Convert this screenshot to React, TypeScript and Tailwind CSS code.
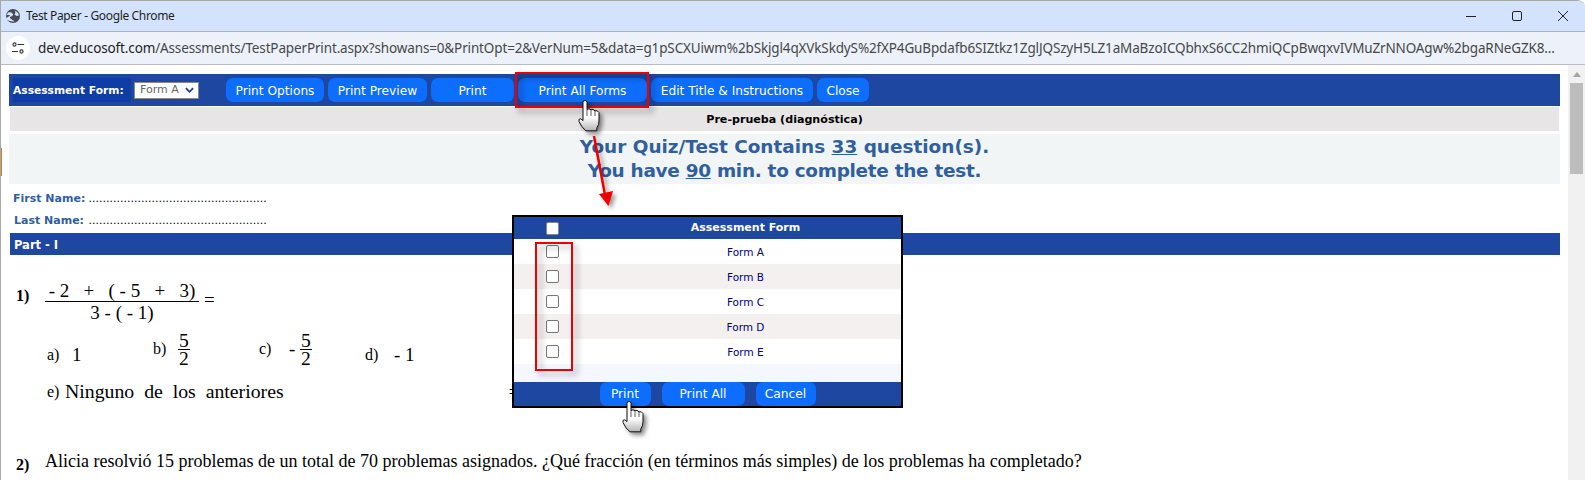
import React from "react";

const verdana = "[font-family:'DejaVu_Sans',Verdana,sans-serif]";

function Hand({ className }: { className: string }) {
  return (
    <svg viewBox="0 0 22 32" className={className}>
      <defs>
        <linearGradient id="handfill" x1="0" y1="0" x2="0" y2="1">
          <stop offset="0.55" stopColor="#ffffff" />
          <stop offset="1" stopColor="#b5b5b5" />
        </linearGradient>
      </defs>
      <path
        d="M5 2.2Q5 .5 7 .5T9 2.2V9.5Q11 8 13 9.8 15 8.6 17 10.8 19.5 10 21 12.6V21Q21 25 18.8 28V30.8H8Q3.5 27.5 1 21.5.2 18.5 2.8 18.8L5 20.6Z"
        fill="url(#handfill)"
        stroke="#111"
        strokeWidth="1"
        strokeLinejoin="round"
      />
      <path d="M9 9.5V16M13 9.8V16M17 10.8V16" stroke="#333" strokeWidth="0.8" fill="none" />
    </svg>
  );
}

function Btn({ w, low, children }: { w: string; low?: boolean; children: React.ReactNode }) {
  return (
    <div className={`${w} h-6 rounded-[7px] bg-[#0d6efd] text-white text-[12.2px] text-center shrink-0 ${low ? "leading-[27px]" : "leading-[25px]"}`}>
      {children}
    </div>
  );
}

function Frac({ n, d, tight }: { n: string; d: string; tight?: boolean }) {
  return (
    <div className={`flex flex-col items-center ${tight ? "leading-[17px] text-[19.5px]" : "leading-[21px] text-[19px] w-[154px]"}`}>
      <div className={`whitespace-pre border-b border-black ${tight ? "px-[1px]" : "w-full text-center"}`}>{n}</div>
      <div className="whitespace-pre">{d}</div>
    </div>
  );
}

const forms = ["Form A", "Form B", "Form C", "Form D", "Form E"];

export default function App() {
  return (
    <div className="relative w-[1585px] h-[480px] overflow-hidden bg-white flex flex-col border-l border-t border-[#a8a8a8] rounded-tr-lg">
      {/* Title bar */}
      <div className="h-[31px] bg-[#d3e3fd] border-b border-[#aab1bc] flex items-center pl-[5px] shrink-0 [font-family:'Noto_Sans',sans-serif]">
        <svg viewBox="0 0 14 14" className="w-[14px] h-[14px]">
          <circle cx="7" cy="7" r="7" fill="#474c54" />
          <path d="M2 3.5Q5 2.5 6.5 4.5T5 7.5 6.5 11 4 12 2 8 .8 6ZM9 1.5Q12 3 13 6.5L10.5 7 8.5 5.5 9.5 3.5Z" fill="#d3e3fd" />
        </svg>
        <span className="ml-[6px] text-[12px] text-[#1f1f1f] tracking-[-0.35px]">Test Paper - Google Chrome</span>
        <div className="ml-auto flex items-center pr-[15px] gap-[32px]">
          <svg viewBox="0 0 14 14" className="w-[14px] h-[14px]"><path d="M2 7.5H12" stroke="#222" strokeWidth="1" /></svg>
          <svg viewBox="0 0 14 14" className="w-[14px] h-[14px]"><rect x="2.5" y="2.5" width="9" height="9" rx="1.5" fill="none" stroke="#222" strokeWidth="1" /></svg>
          <svg viewBox="0 0 14 14" className="w-[14px] h-[14px]"><path d="M2 2L12 12M12 2L2 12" stroke="#222" strokeWidth="1" /></svg>
        </div>
      </div>
      {/* Address bar */}
      <div className="h-[33px] bg-[#edf2fa] border-b border-[#b9bcc2] flex items-center pl-[5px] shrink-0 [font-family:'Noto_Sans',sans-serif]">
        <div className="w-6 h-6 rounded-full bg-white flex items-center justify-center shrink-0">
          <svg viewBox="0 0 16 16" className="w-[14px] h-[14px]" fill="none" stroke="#333" strokeWidth="1.3">
            <circle cx="4" cy="4" r="1.8" />
            <path d="M7.5 4H15M1 12H8" />
            <circle cx="12" cy="12" r="1.8" />
          </svg>
        </div>
        <div className="ml-[8px] text-[13.5px] whitespace-nowrap text-[#474747] tracking-[-0.14px]">
          <span className="text-[#1f1f1f]">dev.educosoft.com</span>
          /Assessments/TestPaperPrint.aspx?showans=0&amp;PrintOpt=2&amp;VerNum=5&amp;data=g1pSCXUiwm%2bSkjgl4qXVkSkdyS%2fXP4GuBpdafb6SIZtkz1ZglJQSzyH5LZ1aMaBzoICQbhxS6CC2hmiQCpBwqxvIVMuZrNNOAgw%2bgaRNeGZK8...
        </div>
      </div>
      {/* Body */}
      <div className={`flex flex-1 min-h-0 ${verdana}`}>
        <div className="w-[1567px] shrink-0 pt-[9px] pl-[8px] pr-[8px] flex flex-col">
          <div className="h-8 bg-[#1e47a1] flex items-center pl-1 shrink-0">
            <div className="w-[118px] h-6 bg-[#0e3da5] text-white font-bold text-[10.7px] leading-[26px] whitespace-nowrap">
              Assessment Form:
            </div>
            <div className="ml-[3px] w-[65px] h-[17px] bg-white border border-[#8a8a8a] flex items-center pl-[5px] text-[11px] text-[#666] shrink-0">
              Form A
              <svg viewBox="0 0 10 6" className="ml-auto mr-[4px] w-[9px] h-[6px]" fill="none" stroke="#1e3f8a" strokeWidth="2">
                <path d="M1 1L5 5L9 1" />
              </svg>
            </div>
            <div className="ml-[27px] flex gap-1">
              <Btn low w="w-[98px]">Print Options</Btn>
              <Btn low w="w-[99px]">Print Preview</Btn>
              <Btn low w="w-[83px]">Print</Btn>
              <Btn low w="w-[129px]">Print All Forms</Btn>
              <Btn low w="w-[162px]">Edit Title &amp; Instructions</Btn>
              <Btn low w="w-[52px]">Close</Btn>
            </div>
          </div>
          <div className="mt-px ml-px mr-px h-6 bg-[#e7e5e6] text-center text-[11.1px] font-bold leading-[25px] text-black shrink-0">
            Pre-prueba (diagnóstica)
          </div>
          <div className="mt-[3px] h-[50px] pt-px bg-[#f2f5f6] text-center text-[18.45px] font-bold leading-[24px] text-[#2f5f9f] shrink-0">
            <div>Your Quiz/Test Contains <u>33</u> question(s).</div>
            <div className="tracking-[-0.28px]">You have <u>90</u> min. to complete the test.</div>
          </div>
          <div className="h-[49px] pl-[4px] text-[11px] shrink-0">
            <div className="mt-[4px] h-[22px] leading-[22px] whitespace-nowrap">
              <b className="inline-block w-[72px] text-center text-[#2f5f9f]">First Name:</b>{" "}
              <span className="text-black">...................................................</span>
            </div>
            <div className="h-[22px] leading-[22px] whitespace-nowrap">
              <b className="inline-block w-[72px] text-center text-[#2f5f9f]">Last Name:</b>{" "}
              <span className="text-black">...................................................</span>
            </div>
          </div>
          <div className="ml-px h-[22px] bg-[#1e47a1] text-white font-bold text-[11.5px] leading-[24px] pl-1 shrink-0">
            Part - I
          </div>
          <div className="[font-family:'Liberation_Serif',serif] text-black text-[19px] pl-[7px]">
            <div className="mt-[24px] flex items-center h-[44px]">
              <b className="w-[29px] text-[16px] mb-[10px]">1)</b>
              <Frac n="- 2   +   ( - 5   +   3)" d="3 - ( - 1)" />
              <span className="ml-[5px] mb-[1px]">=</span>
            </div>
            <div className="mt-[5px] pl-[31px] flex h-[42px] items-center">
              <div className="w-[106px] flex items-center pt-[12px]">
                <span className="text-[16px] w-[25px]">a)</span>1
              </div>
              <div className="w-[106px] flex items-center">
                <span className="text-[16px] w-[25px]">b)</span>
                <Frac tight n="5" d="2" />
              </div>
              <div className="w-[106px] flex items-center">
                <span className="text-[16px] w-[30px]">c)</span>-&nbsp;
                <Frac tight n="5" d="2" />
              </div>
              <div className="w-[106px] flex items-center pt-[12px]">
                <span className="text-[16px] w-[29px]">d)</span>- 1
              </div>
            </div>
            <div className="mt-[10px] pl-[31px] flex items-center h-[24px] whitespace-pre text-[19.8px]">
              <span className="text-[16px] w-[18px]">e)</span>
              <span>Ninguno  de  los  anteriores</span>
              <span className="ml-[225px] text-[18px]">=</span>
            </div>
            <div className="mt-[44px] flex whitespace-nowrap text-[18px]">
              <b className="w-[29px] text-[16px] pt-[5px]">2)</b>
              <span>Alicia resolvió 15 problemas de un total de 70 problemas asignados. ¿Qué fracción (en términos más simples) de los problemas ha completado?</span>
            </div>
          </div>
        </div>
        {/* Scrollbar */}
        <div className="w-[17px] shrink-0 bg-[#f1f1f1] flex flex-col items-center pt-[7px]">
          <div className="w-0 h-0 border-l-[4px] border-r-[4px] border-b-[5px] border-l-transparent border-r-transparent border-b-[#a3a3a3]" />
          <div className="mt-[6px] w-[13px] h-[91px] bg-[#bdbdbd]" />
        </div>
      </div>

      {/* Left edge stripe */}
      <div className="absolute left-[-1px] top-[147px] w-[2px] h-[28px] bg-[#c5803a]" />

      {/* Modal */}
      <div className={`absolute left-[511px] top-[214px] w-[391px] h-[193px] border-2 border-black bg-white flex flex-col ${verdana}`}>
        <div className="h-[22px] bg-[#1e47a1] flex items-center shrink-0">
          <div className="w-[76px] pl-[32px]">
            <div className="w-[13px] h-[13px] bg-white rounded-[2px] border border-[#8a8a8a]" />
          </div>
          <div className="flex-1 text-center text-white font-bold text-[11px] pt-px">Assessment Form</div>
        </div>
        {forms.map((f, i) => (
          <div key={f} className={`h-[25px] flex items-center shrink-0 ${i % 2 === 1 ? "bg-[#f3f0ef]" : "bg-white"}`}>
            <div className="w-[76px] pl-[32px]">
              <div className="w-[13px] h-[13px] bg-white rounded-[2px] border border-[#767676]" />
            </div>
            <div className="flex-1 text-center text-[#000080] text-[10.5px] pt-[2px]">{f}</div>
          </div>
        ))}
        <div className="h-[18px] bg-[#f4f7fe] shrink-0" />
        <div className="flex-1 bg-[#1e47a1] flex justify-center gap-[11px]">
          <Btn w="w-[51px]">Print</Btn>
          <Btn w="w-[83px]">Print All</Btn>
          <Btn w="w-[60px]">Cancel</Btn>
        </div>
      </div>

      {/* Annotations */}
      <div className="absolute left-[514px] top-[71px] w-[134px] h-[36px] border-2 border-[#ee0000] drop-shadow-[4px_4px_3px_rgba(0,0,0,0.45)]" />
      <div className="absolute left-[534px] top-[241px] w-[38px] h-[129px] border-2 border-[#ee0000] drop-shadow-[4px_4px_3px_rgba(0,0,0,0.35)]" />
      <svg viewBox="0 0 40 80" className="absolute left-[582px] top-[130px] w-[40px] h-[80px] drop-shadow-[3px_3px_2px_rgba(0,0,0,0.4)]">
        <path d="M11 5L22 64" stroke="#ee0000" strokeWidth="2.5" />
        <path d="M16 63L30 60L25.5 75Z" fill="#ee0000" />
      </svg>
      <Hand className="absolute left-[577px] top-[99px] w-[22px] h-[32px] drop-shadow-[3px_3px_2px_rgba(0,0,0,0.45)]" />
      <Hand className="absolute left-[621px] top-[400px] w-[22px] h-[32px] drop-shadow-[3px_3px_2px_rgba(0,0,0,0.45)]" />
    </div>
  );
}
